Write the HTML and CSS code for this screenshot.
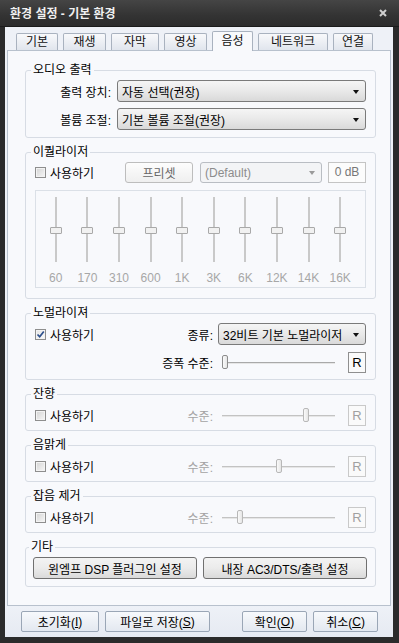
FILE: index.html
```html
<!DOCTYPE html>
<html lang="ko">
<head>
<meta charset="UTF-8">
<title>환경 설정 - 기본 환경</title>
<link rel="stylesheet" href="styles.css">
</head>
<body>

<div class="window">

<!-- Title bar -->
<div class="titlebar">
<span class="title">환경 설정 - 기본 환경</span>
<svg class="close" width="8" height="8" viewBox="0 0 8 8"><path d="M1 1 L7 7 M7 1 L1 7" stroke="#d0d0d0" stroke-width="2"/></svg>
</div>

<div class="client">

<!-- Tabs -->
<div class="tabs">
<span class="tab t-basic">기본</span>
<span class="tab t-play">재생</span>
<span class="tab t-sub">자막</span>
<span class="tab t-video">영상</span>
<span class="tab t-audio active">음성</span>
<span class="tab t-net">네트워크</span>
<span class="tab t-link">연결</span>
</div>

<div class="panel">

<!-- Audio output -->
<fieldset class="group g-output">
<legend>오디오 출력</legend>
<div class="field-row">
<span class="field-label">출력 장치:</span>
<div class="select"><span class="select-text">자동 선택(권장)</span><span class="arrow"></span></div>
</div>
<div class="field-row">
<span class="field-label">볼륨 조절:</span>
<div class="select"><span class="select-text">기본 볼륨 조절(권장)</span><span class="arrow"></span></div>
</div>
</fieldset>

<!-- Equalizer -->
<fieldset class="group g-eq">
<legend>이퀄라이저</legend>
<div class="eq-row">
<label class="check-label eq-check"><span class="checkbox"></span>사용하기</label>
<span class="btn btn-off preset">프리셋</span>
<div class="select select-off preset-select"><span class="select-text">(Default)</span><span class="arrow"></span></div>
<span class="db-box">0 dB</span>
</div>
<div class="eq-box">
<div class="band"><div class="vtrack"><span class="vthumb"></span></div><span class="band-label">60</span></div>
<div class="band"><div class="vtrack"><span class="vthumb"></span></div><span class="band-label">170</span></div>
<div class="band"><div class="vtrack"><span class="vthumb"></span></div><span class="band-label">310</span></div>
<div class="band"><div class="vtrack"><span class="vthumb"></span></div><span class="band-label">600</span></div>
<div class="band"><div class="vtrack"><span class="vthumb"></span></div><span class="band-label">1K</span></div>
<div class="band"><div class="vtrack"><span class="vthumb"></span></div><span class="band-label">3K</span></div>
<div class="band"><div class="vtrack"><span class="vthumb"></span></div><span class="band-label">6K</span></div>
<div class="band"><div class="vtrack"><span class="vthumb"></span></div><span class="band-label">12K</span></div>
<div class="band"><div class="vtrack"><span class="vthumb"></span></div><span class="band-label">14K</span></div>
<div class="band"><div class="vtrack"><span class="vthumb"></span></div><span class="band-label">16K</span></div>
</div>
</fieldset>

<!-- Normalizer -->
<fieldset class="group g-norm">
<legend>노멀라이져</legend>
<div class="level-row type-row">
<label class="check-label"><span class="checkbox checked"><svg width="9" height="9" viewBox="0 0 9 9"><path d="M1.5 4.5 L3.7 6.8 L7.8 1.5" fill="none" stroke="#2d4f8c" stroke-width="1.7"/></svg></span>사용하기</label>
<span class="level-label">종류:</span>
<div class="select type-select"><span class="select-text">32비트 기본 노멀라이저</span><span class="arrow"></span></div>
</div>
<div class="level-row">
<span class="spacer"></span>
<span class="level-label">증폭 수준:</span>
<div class="hslider"><span class="hthumb" style="left: 0px"></span></div>
<span class="r-btn">R</span>
</div>
</fieldset>

<!-- Reverb -->
<fieldset class="group g-small">
<legend>잔향</legend>
<div class="level-row off">
<label class="check-label"><span class="checkbox"></span>사용하기</label>
<span class="level-label">수준:</span>
<div class="hslider"><span class="hthumb" style="left: 81px"></span></div>
<span class="r-btn">R</span>
</div>
</fieldset>

<!-- Clarity -->
<fieldset class="group g-small">
<legend>음맑게</legend>
<div class="level-row off">
<label class="check-label"><span class="checkbox"></span>사용하기</label>
<span class="level-label">수준:</span>
<div class="hslider"><span class="hthumb" style="left: 54px"></span></div>
<span class="r-btn">R</span>
</div>
</fieldset>

<!-- Noise reduction -->
<fieldset class="group g-small">
<legend>잡음 제거</legend>
<div class="level-row off">
<label class="check-label"><span class="checkbox"></span>사용하기</label>
<span class="level-label">수준:</span>
<div class="hslider"><span class="hthumb" style="left: 15px"></span></div>
<span class="r-btn">R</span>
</div>
</fieldset>

<!-- Others -->
<fieldset class="group g-etc">
<legend>기타</legend>
<div class="etc-row">
<span class="btn">윈엠프 DSP 플러그인 설정</span>
<span class="btn">내장 AC3/DTS/출력 설정</span>
</div>
</fieldset>

</div>

<!-- Bottom buttons -->
<div class="footer">
<span class="fbtn f-reset">초기화(<u>I</u>)</span>
<span class="fbtn f-save">파일로 저장(<u>S</u>)</span>
<span class="fbtn f-ok">확인(<u>O</u>)</span>
<span class="fbtn f-cancel">취소(<u>C</u>)</span>
</div>

</div>
</div>

</body>
</html>
```

FILE: styles.css
```css
* {
box-sizing: border-box;
}

body {
margin: 0;
background: #2a2a2a;
font-family: "Liberation Sans", "Noto Sans CJK KR", sans-serif;
font-size: 12px;
color: #000;
}

.window {
width: 399px;
height: 643px;
display: flex;
flex-direction: column;
background: #2b2b2b;
}

/* title bar */
.titlebar {
height: 27px;
flex: none;
display: flex;
align-items: center;
justify-content: space-between;
padding: 0 12px 1px 10px;
background: linear-gradient(#454545, #333 60%, #2c2c2c);
border-bottom: 1px solid #1b1b1b;
}

.title {
color: #f0f0f0;
font-weight: bold;
font-size: 12px;
}

.close {
display: block;
}

.client {
flex: 1;
margin: 0 6px 6px 5px;
display: flex;
flex-direction: column;
background: #eef1f7;
}

/* tabs */
.tabs {
height: 23px;
flex: none;
display: flex;
align-items: flex-end;
gap: 5px;
padding-left: 11px;
}

.tab {
height: 17px;
border: 1px solid #a9b2bf;
border-bottom: none;
border-radius: 2px 2px 0 0;
background: linear-gradient(#f8f9fb, #e0e5ed);
text-align: center;
line-height: 16px;
color: #111;
}

.tab.active {
height: 20px;
margin-bottom: -1px;
background: #f8f9fc;
position: relative;
z-index: 1;
line-height: 18px;
}

.t-basic { width: 42px; }
.t-play { width: 43px; }
.t-sub { width: 48px; }
.t-video { width: 43px; }
.t-audio { width: 41px; }
.t-net { width: 70px; }
.t-link { width: 40px; }

/* main panel */
.panel {
flex: 1;
margin: 0 2px;
border: 1px solid #b8c1cd;
background: #f8f9fc;
padding: 12px 14px 0 17px;
display: flex;
flex-direction: column;
gap: 7px;
}

.group {
margin: 0;
min-width: 0;
border: 1px solid #d7dce4;
border-radius: 3px;
padding: 3px 9px 6px 9px;
}

.group legend {
padding: 0 2px;
margin-left: -4px;
line-height: 14px;
font-size: 12px;
}

.g-output {
padding-bottom: 7px;
}

.g-eq {
padding-bottom: 10px;
}

.g-small {
padding-top: 4px;
padding-bottom: 4px;
}

.g-etc {
padding: 3px 8px 7px 7px;
}

/* select boxes */
.field-row {
display: flex;
align-items: center;
height: 22px;
}

.field-row + .field-row {
margin-top: 6px;
}

.field-label {
width: 76px;
margin-right: 6px;
text-align: right;
}

.select {
height: 22px;
flex: 1;
display: flex;
align-items: center;
border: 1px solid #7a7a7a;
border-radius: 3px;
background: linear-gradient(#f5f5f5, #e9e9e9 50%, #d9d9d9);
padding-left: 4px;
overflow: hidden;
}

.select-text {
flex: 1;
white-space: nowrap;
overflow: hidden;
}

.arrow {
flex: none;
width: 0;
height: 0;
margin: 1px 6px 0 6px;
border-left: 3.5px solid transparent;
border-right: 3.5px solid transparent;
border-top: 4px solid #111;
}

.select-off {
border-color: #b9bdc3;
background: #f3f4f6;
color: #8c8c8c;
}

.select-off .arrow {
border-top-color: #9a9a9a;
}

/* equalizer */
.eq-row {
display: flex;
align-items: center;
height: 21px;
}

.eq-check {
width: 90px;
}

.btn {
height: 22px;
display: flex;
align-items: center;
justify-content: center;
border: 1px solid #707070;
border-radius: 3px;
background: linear-gradient(#f3f3f3, #ebebeb 50%, #dadada);
}

.btn-off {
border-color: #bdbdbd;
background: linear-gradient(#fdfdfd, #efefef);
color: #666;
}

.preset {
width: 68px;
height: 21px;
}

.preset-select {
flex: none;
width: 122px;
height: 21px;
margin-left: 7px;
}

.db-box {
width: 38px;
height: 21px;
margin-left: 6px;
border: 1px solid #c4c4c4;
background: #fcfcfc;
color: #777;
text-align: center;
line-height: 19px;
}

.eq-box {
margin-top: 7px;
border: 1px solid #dbe0e7;
padding: 6px 0 2px 4px;
display: grid;
grid-template-columns: repeat(10, 31.6px);
}

.band {
display: flex;
flex-direction: column;
align-items: center;
}

.vtrack {
width: 2px;
height: 65px;
background: #c9c9c9;
position: relative;
}

.vthumb {
position: absolute;
top: 30px;
left: -5px;
width: 12px;
height: 7px;
border: 1px solid #a9a9a9;
border-radius: 1px;
background: #f1f1f1;
}

.band-label {
margin-top: 9px;
line-height: 14px;
color: #a7a7a7;
}

/* checkbox */
.check-label {
display: flex;
align-items: center;
gap: 4px;
}

.checkbox {
width: 11px;
height: 11px;
flex: none;
border: 1px solid #8e8e8e;
background: linear-gradient(135deg, #d4d4d4, #f6f6f6);
box-shadow: inset 0 0 0 1px #f3f3f3;
display: flex;
align-items: center;
justify-content: center;
}

.checkbox.checked {
background: linear-gradient(135deg, #e4e4e4, #fafafa);
}

/* level rows */
.level-row {
display: flex;
align-items: center;
height: 21px;
}

.type-row {
height: 22px;
}

.level-row + .level-row {
margin-top: 7px;
}

.level-row .check-label,
.spacer {
flex: 1;
}

.level-label {
margin-right: 9px;
}

.type-row .level-label {
margin-right: 5px;
}

.type-select {
flex: none;
width: 148px;
}

.hslider {
width: 113px;
height: 21px;
position: relative;
}

.hslider::before {
content: "";
position: absolute;
left: 0;
right: 0;
top: 10px;
height: 1px;
background: #a9a9a9;
box-shadow: 0 1px 0 #e6e6e6;
}

.hthumb {
position: absolute;
top: 3px;
width: 6px;
height: 14px;
border: 1px solid #8d8d8d;
border-radius: 2px;
background: linear-gradient(90deg, #fafafa, #e6e6e6);
}

.r-btn {
width: 18px;
height: 21px;
margin-left: 13px;
border: 1px solid #8f8f8f;
background: #fafafa;
text-align: center;
line-height: 19px;
font-size: 13px;
}

.off .level-label {
color: #a3a3a3;
}

.off .hslider::before {
background: #c3c3c3;
}

.off .hthumb {
border-color: #b8b8b8;
}

.off .r-btn {
border-color: #c9c9c9;
color: #a0a0a0;
}

/* others */
.etc-row {
display: flex;
gap: 6px;
}

.etc-row .btn {
width: 164px;
}

/* footer */
.footer {
height: 31px;
flex: none;
display: flex;
gap: 6px;
padding: 5px 15px 0 16px;
background: linear-gradient(#eef1f7, #e6eaf2);
}

.fbtn {
height: 21px;
display: flex;
align-items: center;
justify-content: center;
border: 1px solid #9aa6b6;
border-radius: 2px;
background: linear-gradient(#f7f9fc, #e3e8f0);
}

.f-reset { width: 78px; }
.f-save { width: 105px; }
.f-ok { width: 65px; margin-left: auto; }
.f-cancel { width: 65px; }
```
